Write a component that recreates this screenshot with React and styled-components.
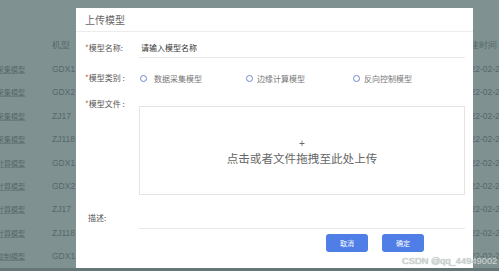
import React from "react";
import styled, { createGlobalStyle } from "styled-components";

const GlobalStyle = createGlobalStyle`
  html, body {
    margin: 0;
    padding: 0;
    background: #7f9291;
  }
  body {
    font-family: "Noto Sans CJK SC", "Noto Sans", sans-serif;
  }
`;

const Page = styled.div`
  position: relative;
  width: 499px;
  height: 271px;
  overflow: hidden;
  background: #7f9291;
  display: flex;
  flex-direction: column;
`;

const Table = styled.div`
  flex: 1;
  padding-top: 34px;
  display: flex;
  flex-direction: column;
`;

const Row = styled.div`
  height: 23.4px;
  display: grid;
  grid-template-columns: 25px 27px 1fr 38px;
  align-items: center;
  font-size: 8px;
  color: #56676a;
  white-space: nowrap;
`;

const NameCell = styled.div`
  display: flex;
  justify-content: flex-end;
  overflow: visible;
  font-size: 7px;
  text-decoration: underline;
  text-decoration-color: #6b7d7c;
`;

const TypeCell = styled.div`
  grid-column: 3;
  font-family: "Liberation Sans", sans-serif;
  font-size: 8.5px;
`;

const DateCell = styled.div`
  grid-column: 4;
  font-family: "Liberation Sans", sans-serif;
  font-size: 8.5px;
`;

const BottomBar = styled.div`
  height: 3px;
  background: #66777a;
`;

const Modal = styled.div`
  position: absolute;
  left: 76px;
  top: 8px;
  width: 397px;
  height: 260px;
  background: #fff;
  display: flex;
  flex-direction: column;
`;

const Header = styled.div`
  height: 23px;
  border-bottom: 1px solid #ececec;
  display: flex;
  align-items: center;
  padding-left: 9px;
  font-size: 10px;
  color: #666;
`;

const Form = styled.div`
  display: grid;
  grid-template-columns: 54px 1fr;
  padding: 5px 8px 0 9px;
  align-items: start;
`;

const Label = styled.div`
  font-size: 8px;
  color: #555;
  line-height: ${(p) => p.$h || 21}px;
  margin-top: ${(p) => p.$mt || 0}px;
  padding-left: ${(p) => p.$pl || 0}px;
  white-space: nowrap;
`;

const Star = styled.span`
  color: #c0504d;
`;

const Field = styled.div`
  margin-top: ${(p) => p.$mt || 0}px;
`;

const Input = styled.div`
  height: 20px;
  border-bottom: 1px solid #e8e8e8;
  display: flex;
  align-items: center;
  padding-left: 2px;
  font-size: 8px;
  color: ${(p) => (p.$dark ? "#333" : "#999")};
`;

const RadioGroup = styled.div`
  display: grid;
  grid-template-columns: 107px 107px 1fr;
  height: 14px;
  align-items: center;
`;

const Radio = styled.label`
  display: flex;
  align-items: center;
  gap: ${(p) => p.$gap}px;
  font-size: 8px;
  color: #777;
  padding-left: ${(p) => p.$pl}px;
`;

const Circle = styled.span`
  width: 5px;
  height: 5px;
  border-radius: 50%;
  border: 1px solid #6f86cf;
  background: #fff;
`;

const Dropzone = styled.div`
  height: 87px;
  margin-top: 8px;
  border: 1px solid #e4e4e4;
  display: flex;
  flex-direction: column;
  align-items: center;
  justify-content: center;
  color: #666;
`;

const Plus = styled.div`
  font-size: 10px;
  line-height: 10px;
  font-family: "Liberation Sans", sans-serif;
  margin-top: 4px;
`;

const DropText = styled.div`
  font-size: 11.6px;
  line-height: 16px;
  margin-top: 1px;
`;

const Footer = styled.div`
  display: flex;
  justify-content: flex-end;
  gap: 14px;
  padding: 5px 49px 0 0;
`;

const Button = styled.button`
  width: 42px;
  height: 18px;
  border: none;
  border-radius: 3px;
  background: #4f7ee6;
  color: #fff;
  font-size: 7px;
  font-family: inherit;
  padding: 0;
`;

const Watermark = styled.div`
  position: absolute;
  left: 402px;
  top: 256px;
  white-space: nowrap;
  font-family: "Liberation Sans", sans-serif;
  font-size: 9.3px;
  color: #d2d6d6;
  text-shadow: 0 0 1px #8a9a99;
`;

const rows = [
  ["数据采集模型", "GDX1"],
  ["数据采集模型", "GDX2"],
  ["数据采集模型", "ZJ17"],
  ["数据采集模型", "ZJ118"],
  ["边缘计算模型", "GDX1"],
  ["边缘计算模型", "GDX2"],
  ["边缘计算模型", "ZJ17"],
  ["边缘计算模型", "ZJ118"],
  ["反向控制模型", "GDX1"],
];

export default function App() {
  return (
    <>
      <GlobalStyle />
      <Page>
        <Table>
          <Row>
            <NameCell />
            <TypeCell>机型</TypeCell>
            <DateCell>创建时间</DateCell>
          </Row>
          {rows.map(([name, type], i) => (
            <Row key={i}>
              <NameCell>{name}</NameCell>
              <TypeCell>{type}</TypeCell>
              <DateCell>2022-02-22 10:30</DateCell>
            </Row>
          ))}
        </Table>
        <BottomBar />

        <Modal>
          <Header>上传模型</Header>
          <Form>
            <Label>
              <Star>*</Star>模型名称:
            </Label>
            <Input $dark>请输入模型名称</Input>

            <Label $h={14} $mt={13}>
              <Star>*</Star>模型类别 :
            </Label>
            <Field $mt={13}>
              <RadioGroup>
                <Radio $gap={7} $pl={1}>
                  <Circle />
                  数据采集模型
                </Radio>
                <Radio $gap={4} $pl={0}>
                  <Circle />
                  边缘计算模型
                </Radio>
                <Radio $gap={4} $pl={0}>
                  <Circle />
                  反向控制模型
                </Radio>
              </RadioGroup>
            </Field>

            <Label $h={12} $mt={13}>
              <Star>*</Star>模型文件 :
            </Label>
            <Field $mt={13}>
              <Dropzone>
                <Plus>+</Plus>
                <DropText>点击或者文件拖拽至此处上传</DropText>
              </Dropzone>
            </Field>

            <Label $h={20} $mt={13} $pl={3}>
              描述:
            </Label>
            <Field $mt={13}>
              <Input />
            </Field>
          </Form>
          <Footer>
            <Button>取消</Button>
            <Button>确定</Button>
          </Footer>
        </Modal>
        <Watermark>CSDN @qq_44949002</Watermark>
      </Page>
    </>
  );
}
